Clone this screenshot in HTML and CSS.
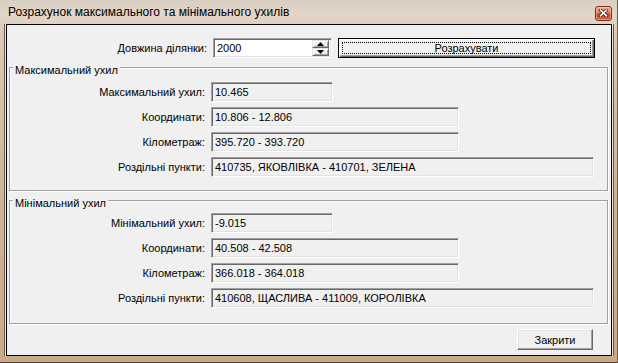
FILE: index.html
```html
<!DOCTYPE html>
<html lang="uk">
<head>
  <meta charset="UTF-8" />
  <title>Розрахунок максимального та мінімального ухилів</title>
  <link rel="stylesheet" href="styles.css">
</head>
<body>
  <div class="window">
    <div class="titlebar">
      <span class="title">Розрахунок максимального та мінімального ухилів</span>
      <span class="close-btn">
        <svg width="9" height="8" viewBox="0 0 9 8">
          <path d="M1.5 1.2 L7.5 6.8 M7.5 1.2 L1.5 6.8" stroke="#3b1c12" stroke-width="3.2" stroke-linecap="square"/>
          <path d="M1.5 1.2 L7.5 6.8 M7.5 1.2 L1.5 6.8" stroke="#fff" stroke-width="1.6" stroke-linecap="square"/>
        </svg>
      </span>
    </div>

    <div class="client">
      <div class="top-row">
        <span class="label top-label">Довжина ділянки:</span>
        <div class="edit spin-edit">
          <span class="edit-text">2000</span>
          <div class="spin">
            <span class="spin-btn">
              <svg width="7" height="4" viewBox="0 0 7 4"><path d="M3.5 0 L7 4 L0 4 Z" fill="#000"/></svg>
            </span>
            <span class="spin-btn">
              <svg width="7" height="4" viewBox="0 0 7 4"><path d="M0 0 L7 0 L3.5 4 Z" fill="#000"/></svg>
            </span>
          </div>
        </div>
        <span class="btn btn-default calc-btn"><span class="focus-rect">Розрахувати</span></span>
      </div>

      <div class="group">
        <div class="group-title">Максимальний ухил</div>
        <div class="rows">
          <div class="row"><span class="label">Максимальний ухил:</span><span class="field short">10.465</span></div>
          <div class="row"><span class="label">Координати:</span><span class="field mid">10.806 - 12.806</span></div>
          <div class="row"><span class="label">Кілометраж:</span><span class="field mid">395.720 - 393.720</span></div>
          <div class="row"><span class="label">Роздільні пункти:</span><span class="field long">410735, ЯКОВЛІВКА - 410701, ЗЕЛЕНА</span></div>
        </div>
      </div>

      <div class="group group-min">
        <div class="group-title">Мінімальний ухил</div>
        <div class="rows">
          <div class="row"><span class="label">Мінімальний ухил:</span><span class="field short">-9.015</span></div>
          <div class="row"><span class="label">Координати:</span><span class="field mid">40.508 - 42.508</span></div>
          <div class="row"><span class="label">Кілометраж:</span><span class="field mid">366.018 - 364.018</span></div>
          <div class="row"><span class="label">Роздільні пункти:</span><span class="field long">410608, ЩАСЛИВА - 411009, КОРОЛІВКА</span></div>
        </div>
      </div>

      <div class="footer">
        <span class="btn close-dialog">Закрити</span>
      </div>
    </div>
  </div>
</body>
</html>
```

FILE: styles.css
```css
:root {
  --face: #f0f0f0;
  --light: #e3e3e3;
  --shadow: #a0a0a0;
  --dark: #696969;
}

body {
  margin: 0;
  font-family: 'Liberation Sans', Arial, sans-serif;
  font-size: 11px;
  color: #000;
}

.window {
  width: 618px;
  height: 363px;
  box-sizing: border-box;
  display: flex;
  flex-direction: column;
  background: linear-gradient(180deg, #d8cec2 0px, #e2d6c7 14px, #d9c8b3 40px, #cdb496 55%, #c9aa88 100%);
  border-right: 1px solid #6e5f4f;
  border-bottom: 1px solid #4d4238;
}

.titlebar {
  height: 24px;
  display: flex;
  align-items: center;
  justify-content: space-between;
  padding: 0 5px 0 8px;
  flex-shrink: 0;
}

.title {
  font-size: 12px;
  color: #000;
}

.close-btn {
  width: 15px;
  height: 13px;
  border: 1px solid #7b3020;
  border-radius: 3px;
  background: linear-gradient(180deg, #eab19e 0%, #dc7a60 45%, #c8452a 55%, #d8653f 100%);
  box-shadow: inset 0 0 0 1px rgba(255, 220, 200, 0.45);
  display: flex;
  align-items: center;
  justify-content: center;
  margin-top: 2px;
}

.client {
  margin: 0 5px 0 6px;
  height: 332px;
  box-sizing: border-box;
  border: 1px solid #000;
  background-color: var(--face);
  padding: 13px 3px 0 2px;
  display: flex;
  flex-direction: column;
  box-shadow: -1px 0 0 #efe6dc, -2px 0 0 #6a5846, 1px 0 0 #efe6dc, 2px 0 0 #6a5846;
}

.label {
  text-align: right;
  white-space: nowrap;
}

/* top row */
.top-row {
  height: 20px;
  display: flex;
  align-items: center;
  margin-bottom: 9px;
}

.top-label {
  width: 198px;
  margin-right: 6px;
}

.edit,
.field {
  box-sizing: border-box;
  height: 20px;
  border: 1px solid;
  border-color: var(--shadow) #fff #fff var(--shadow);
  box-shadow: inset 1px 1px 0 var(--dark), inset -1px -1px 0 var(--light);
  display: flex;
  align-items: center;
  padding-left: 3px;
  white-space: nowrap;
}

.spin-edit {
  width: 119px;
  background-color: #fff;
  padding: 2px 2px 2px 3px;
}

.edit-text {
  flex: 1;
}

.spin {
  display: flex;
  flex-direction: column;
  width: 17px;
  height: 16px;
}

.spin-btn {
  flex: 1;
  box-sizing: border-box;
  background-color: var(--face);
  border: 1px solid;
  border-color: var(--light) var(--dark) var(--dark) var(--light);
  box-shadow: inset 1px 1px 0 #fff, inset -1px -1px 0 var(--shadow);
  display: flex;
  align-items: center;
  justify-content: center;
}

.btn {
  box-sizing: border-box;
  background-color: var(--face);
  border: 1px solid;
  border-color: #fff var(--dark) var(--dark) #fff;
  box-shadow: inset -1px -1px 0 var(--shadow), inset 1px 1px 0 var(--light);
  display: flex;
  align-items: center;
  justify-content: center;
}

.btn-default {
  border-color: #000;
  box-shadow: inset 1px 1px 0 #fff, inset -1px -1px 0 var(--dark), inset -2px -2px 0 var(--shadow);
}

.calc-btn {
  width: 257px;
  height: 20px;
  margin-left: 6px;
  padding: 3px;
}

.focus-rect {
  flex: 1;
  align-self: stretch;
  border: 1px dotted #000;
  display: flex;
  align-items: center;
  justify-content: center;
}

/* group boxes */
.group {
  height: 124px;
  box-sizing: border-box;
  border: 1px solid var(--shadow);
  box-shadow: inset 1px 1px 0 #fff, 1px 1px 0 #fff;
  display: flex;
  flex-direction: column;
}

.group-min {
  margin-top: 9px;
}

.group-title {
  align-self: flex-start;
  margin: -4px 0 0 3px;
  padding: 0 2px;
  line-height: 13px;
  background-color: var(--face);
}

.rows {
  margin-top: 5px;
  display: flex;
  flex-direction: column;
  gap: 5px;
}

.group-min .rows {
  margin-top: 3px;
}

.row {
  display: flex;
  align-items: center;
  height: 20px;
}

.row .label {
  width: 195px;
  margin-right: 6px;
}

.field {
  background-color: var(--face);
}

.short { width: 122px; }
.mid { width: 248px; }
.long { width: 383px; }

/* footer */
.footer {
  display: flex;
  justify-content: flex-end;
  margin-top: 5px;
  padding-right: 15px;
}

.close-dialog {
  width: 76px;
  height: 21px;
}
```
